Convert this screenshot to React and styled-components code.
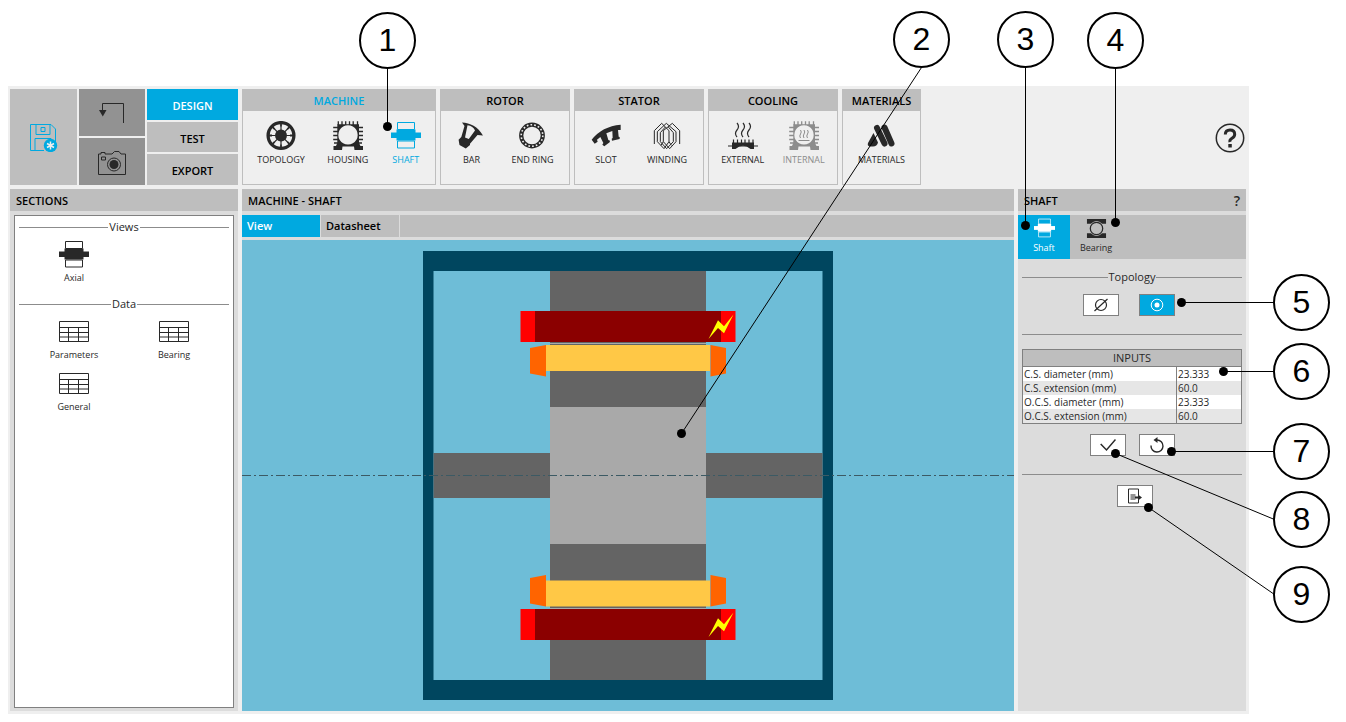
import React, { useState } from 'react'
import styled, { createGlobalStyle } from 'styled-components'

const accent = '#00a9e0'
const grey = '#bebebe'
const ink = '#282828'

const GlobalStyle = createGlobalStyle`
  * {
    box-sizing: border-box;
  }

  body {
    margin: 0;
    background: white;
    color: black;
    font-family: 'Open Sans', 'Noto Sans', sans-serif;
    font-size: 11px;
  }

  button, input {
    font: inherit;
    color: inherit;
  }

  button {
    padding: 0;
    border: 0;
    cursor: pointer;
  }
`

const Page = styled.div`
  position: relative;
  display: flex;
  min-height: 100vh;
  padding: 86px 97px 8px 8px;
`

const Frame = styled.div`
  flex: 1;
  display: flex;
  flex-direction: column;
  gap: 4px;
  min-width: 0;
  padding: 3px 3px 3px 2px;
  background: #efefef;
`

const Header = styled.header`
  display: flex;
  gap: 4px;
  height: 96px;
`

const MainMenu = styled.nav`
  display: grid;
  grid-template-columns: 67px 66px 1fr;
  gap: 2px;
  width: 228px;
`

const MenuColumn = styled.div`
  display: flex;
  flex-direction: column;
  gap: 2px;
`

const MenuButton = styled.button`
  flex: 1;
  display: flex;
  align-items: center;
  justify-content: center;
  padding-top: 2px;
  background: ${props => props.$active ? accent : props.$dark ? '#929292' : grey};
  color: ${props => props.$active ? 'white' : 'black'};
  font-size: 11px;
  font-weight: 600;
`

const Group = styled.section`
  display: flex;
  flex-direction: column;
  width: ${props => props.$width}px;
  border: 1px solid ${grey};
`

const GroupTitle = styled.h2`
  margin: 0;
  height: 21px;
  background: ${grey};
  color: ${props => props.$active ? accent : 'black'};
  font-size: 11px;
  font-weight: 600;
  line-height: 21px;
  text-align: center;
`

const GroupItems = styled.div`
  display: flex;
  justify-content: space-around;
  padding: 10px 3px 0;
`

const ToolButton = styled.button`
  display: flex;
  flex-direction: column;
  align-items: center;
  gap: 1px;
  background: none;
  color: ${props => props.$active ? accent : props.disabled ? '#8c8c8c' : ink};
  font-size: 9px;
  line-height: 16px;
`

const HelpButton = styled.button`
  align-self: center;
  margin: 1px 1px 0 auto;
  background: none;
  color: ${ink};
  line-height: 0;
`

const Workspace = styled.div`
  flex: 1;
  display: grid;
  grid-template-columns: 228px 1fr 228px;
  gap: 4px;
`

const Panel = styled.section`
  display: flex;
  flex-direction: column;
  min-width: 0;
  background: #dcdcdc;
`

const PanelTitle = styled.h2`
  display: flex;
  justify-content: space-between;
  margin: 0 0 4px;
  padding: 0 6px;
  height: 22px;
  background: ${grey};
  font-size: 11px;
  font-weight: 600;
  line-height: 24px;
`

const PanelHelp = styled.button`
  background: none;
  color: ${ink};
  font-size: 14px;
`

const SectionList = styled.div`
  flex: 1;
  margin: 0 4px 3px;
  padding: 2px 4px;
  border: 1px solid #808080;
  background: white;
`

const Legend = styled.h3`
  display: flex;
  align-items: center;
  gap: 1px;
  margin: 0;
  color: ${ink};
  font-size: 11px;
  font-weight: 400;
  line-height: 18px;

  &::before, &::after {
    content: '';
    flex: 1;
    height: 1px;
    background: #8c8c8c;
  }
`

const SectionGrid = styled.div`
  display: grid;
  grid-template-columns: 100px 100px;
  grid-auto-rows: 52px;
  padding: 5px 5px 2px;
`

const SectionButton = styled.button`
  display: flex;
  flex-direction: column;
  align-items: center;
  justify-content: flex-start;
  gap: 1px;
  background: none;
  color: ${ink};
  font-size: 9px;
  line-height: 16px;
`

const Tabs = styled.div`
  display: flex;
  height: 22px;
  margin-bottom: 3px;
  background: ${grey};
`

const Tab = styled.button`
  width: 79px;
  padding: 0 5px;
  border-right: 1px solid #dcdcdc;
  background: ${props => props.$active ? accent : 'none'};
  color: ${props => props.$active ? 'white' : 'black'};
  font-size: 11px;
  font-weight: 600;
  line-height: 22px;
  text-align: left;
`

const Canvas = styled.div`
  flex: 1;
  min-height: 0;
  background: #6ebdd7;

  svg {
    display: block;
    width: 100%;
  }
`

const IconTabs = styled.div`
  display: flex;
  height: 44px;
  background: ${grey};
`

const IconTab = styled.button`
  display: flex;
  flex-direction: column;
  align-items: center;
  gap: 1px;
  width: 52px;
  padding-top: 3px;
  background: ${props => props.$active ? accent : 'none'};
  color: ${props => props.$active ? 'white' : ink};
  font-size: 9px;
  line-height: 16px;
`

const Settings = styled.div`
  padding: 9px 4px;
`

const ButtonRow = styled.div`
  display: flex;
  justify-content: center;
  gap: ${props => props.$wide ? 20 : 13}px;
  padding-left: ${props => props.$single ? 6 : 0}px;
  padding-right: ${props => props.$wide ? 6 : 0}px;
  margin: ${props => props.$wide ? 8 : 10}px 0 18px;
`

const SmallButton = styled.button`
  display: flex;
  align-items: center;
  justify-content: center;
  width: 36px;
  height: 22px;
  border: 1px solid #808080;
  background: ${props => props.$active ? accent : 'white'};
  color: ${props => props.$active ? 'white' : ink};
`

const Divider = styled.hr`
  margin: 0;
  border: 0;
  border-top: 1px solid #8c8c8c;
`

const InputTable = styled.table`
  width: 100%;
  margin-top: 14px;
  border: 1px solid #808080;
  border-collapse: collapse;
  color: ${ink};
  font-size: 10px;
  line-height: 14px;

  th {
    height: 17px;
    padding: 0;
    border-bottom: 1px solid #808080;
    background: ${grey};
    font-size: 11px;
    font-weight: 400;
  }

  td {
    height: 14px;
    padding: 0 1px;
    background: white;
  }

  td + td {
    width: 65px;
    border-left: 1px solid #808080;
  }

  tr:nth-child(even) td {
    background: #e6e6e6;
  }

  input {
    display: block;
    width: 100%;
    height: 14px;
    padding: 0;
    border: 0;
    background: none;
  }
`

const CalloutLines = styled.svg`
  position: absolute;
  top: 0;
  left: 0;
  width: 100%;
  height: 100%;
  pointer-events: none;
`

const Callout = styled.div`
  position: absolute;
  left: ${props => props.$x - 28}px;
  top: ${props => props.$y - 28}px;
  width: 57px;
  height: 57px;
  border: 2px solid black;
  border-radius: 50%;
  background: white;
  font-family: 'Liberation Sans', Arial, sans-serif;
  font-size: 32px;
  line-height: 53px;
  text-align: center;
`

const Icon = ({ children, size = 30, height = size, box = '0 0 30 30' }) => (
  <svg width={size} height={height} viewBox={box} fill="currentColor" aria-hidden="true">
    {children}
  </svg>
)

const SaveIcon = () => (
  <Icon size={28} box="0 0 28 28">
    <g fill="none" stroke={accent} strokeWidth="1">
      <path d="M.5.5H21L25.5 5V18M.5.5V26.5H14M6 .5V10.5H20V.5M11 3.5h4v4h-4zM5 26.5V14.5H21V17" />
    </g>
    <circle cx="20.5" cy="21.5" r="6.7" fill={accent} />
    <path d="M20.5 17.5v8M17 19.5l7 4M17 23.5l7-4" stroke="#eee" strokeWidth="1.5" />
  </Icon>
)

const BackIcon = () => (
  <Icon size={26} height={21} box="0 0 26 21">
    <path d="M3.5 8V.5H24.5V20" fill="none" stroke={ink} />
    <path d="M0 7h7.5L3.8 13.5z" fill={ink} />
  </Icon>
)

const CameraIcon = () => (
  <Icon size={28} height={24} box="0 0 28 24">
    <g fill="none" stroke={ink} strokeWidth="1">
      <path d="M.5 3H3V1.5H7V3H14L16.5.5H21L23 3H27.5V23.5H.5zM3.500 6h4v3h-4z" />
      <circle cx="16" cy="13.5" r="6.5" />
    </g>
    <circle cx="16" cy="13.5" r="4.5" fill={ink} />
  </Icon>
)

const TopologyIcon = () => (
  <Icon>
    <circle cx="15" cy="14.5" r="12.9" fill="none" stroke="currentColor" strokeWidth="3.3" />
    <circle cx="15" cy="14.5" r="6" />
    {[0, 45, 90, 135, 180, 225, 270, 315].map(angle => (
      <path key={angle} d="M14.1 2h1.800v3.500h-1.800zM14.400 5h1.200v4h-1.200z" transform={`rotate(${angle} 15 14.5)`} />
    ))}
  </Icon>
)

const HousingShape = () => (
  <g>
    <path fillRule="evenodd" d="M4.3 3.3H26V22l1.500 3H30v4H21.500l-.5-3.500H9.500L9 29H.5v-4H3l1.300-3zM15 4.200a9.700 9.700 0 1 0 .01 0z" />
    <path
      d="M5.3 4V.3M9 4V.3M12.700 4V.3M16.500 4V.3M20.200 4V.3M24.500 4V.3M.2 6.500H5M.2 10.500H5M.2 14.500H5M.2 18.500H5M1 22H5M25 6.500H30M25 10.500H30M25 14.500H30M25 18.500H30M25 22H29"
      stroke="currentColor"
      strokeWidth="1.3"
    />
  </g>
)

const HousingIcon = () => <Icon><HousingShape /></Icon>

const ShaftShape = () => (
  <g>
    <path d="M6.5 1.5h17v7h-17zM6.500 20h17v7h-17z" fill="none" stroke="currentColor" strokeWidth="1" />
    <path d="M5.5 8.5h19v11h-19z" />
    <path d="M0 11.5h30v5.500H0z" />
  </g>
)

const ShaftIcon = ({ size = 30 }) => <Icon size={size}><ShaftShape /></Icon>

const AxialIcon = () => <Icon height={28} box="0 1 30 28"><ShaftShape /></Icon>

const BarIcon = () => (
  <Icon>
    <path fillRule="evenodd" d="M6 1.5C14 2 22 5.500 27 14.500L21.500 14 14 22.700V24L9.800 27.500 3.500 24 2.600 18.700 5.300 16 8.500 5zM11.500 4.300L9 16.500l3.800 1.500 6.200-8.500c-1-2.700-4-4.800-7.500-5.200z" />
  </Icon>
)

const EndRingIcon = () => (
  <Icon>
    <circle cx="15" cy="14.5" r="10.8" fill="none" stroke="currentColor" strokeWidth="4.2" />
    <circle cx="15" cy="14.5" r="10.8" fill="none" stroke="#efefef" strokeWidth="1.6" strokeDasharray="1.7 2.070" />
  </Icon>
)

const SlotIcon = () => (
  <Icon box="465 122 90 90">
    <path d="M467 178Q498 138 554 133V149H546L548 169 551 170V176L528 181 527 175 530 173 529 152 511 159 517 179 522 181 521 186 505 198 499 193 502 188 493 170 483 178 485 184 476 190z" />
  </Icon>
)

const WindingIcon = () => (
  <Icon box="648 122 90 90">
    <g fill="none" stroke="currentColor" strokeWidth="3">
      <path d="M655 191V151L677 129 699 151V184L706 195M664 184V154L691 129 720 154V184M731 191V151L709 129 682 151V184L675 195M673 157V184L692 205 712 184V157L697 140M673 157L688 140M664 184L684 205 699 184M720 184L701 205 682 184" />
    </g>
  </Icon>
)

const heat = 'q-3-3.5 0-7t0-7'

const ExternalIcon = () => (
  <Icon>
    <path d={`M9 16${heat}M15 16${heat}M21 16${heat}`} fill="none" stroke="currentColor" strokeWidth="1.2" />
    <path d="M4 21.5H26V28H22.500Q15 21.500 7.500 28H4z" />
    <path d="M0 25h30M5.500 22v-3.500M9.500 22v-3.500M13.500 22v-3.500M17 22v-3.500M21 22v-3.500M25 22v-3.500" stroke="currentColor" strokeWidth="1.2" />
  </Icon>
)

const InternalIcon = () => (
  <Icon>
    <HousingShape />
    <path d="M11.5 17q-1.500-2 0-4t0-4M15 17q-1.500-2 0-4t0-4M18.500 17q-1.500-2 0-4t0-4M9.500 19.500h11" fill="none" stroke="currentColor" />
  </Icon>
)

const MaterialsIcon = () => (
  <Icon>
    <path d="M11 7L18.5 22.500M18.500 6.500L25.500 22.500" stroke="currentColor" strokeWidth="6" strokeLinecap="round" />
    <path d="M7.5 12L12 21.500Q11 25.500 7 25.500H4Q1 25 2 22z" />
  </Icon>
)

const TableIcon = () => (
  <Icon height={28} box="0 -3 30 28">
    <path d="M.5.5h29v20H.5zM.5 6.500h29M.5 11.500h29M.5 16h29M9.500 6.500v14M19.500 6.500v14" fill="none" stroke="currentColor" />
  </Icon>
)

const BearingIcon = () => (
  <Icon size={21} box="0 0 22 22">
    <path d="M1 1h20v5h-4Q11 .5 5 6H1zM1 21h20v-5h-4Q11 21.500 5 16H1z" />
    <circle cx="11" cy="11" r="6.5" fill={grey} stroke="currentColor" strokeWidth="1.3" />
  </Icon>
)

const HelpIcon = () => (
  <Icon>
    <circle cx="15" cy="15" r="13.7" fill="none" stroke="currentColor" strokeWidth="1.5" />
    <path d="M10.3 11.5Q10.300 7 15 7T19.700 11.200Q19.700 13.500 17 15.200T15 19" fill="none" stroke="currentColor" strokeWidth="3" />
    <path d="M13.3 21h3.500v3.500h-3.500z" />
  </Icon>
)

const SolidIcon = () => (
  <Icon size={16} box="0 0 16 16">
    <g fill="none" stroke="currentColor" strokeWidth="1.2">
      <circle cx="8" cy="8" r="5.5" />
      <path d="M1.5 14L14.500 2" />
    </g>
  </Icon>
)

const HollowIcon = () => (
  <Icon size={16} box="0 0 16 16">
    <circle cx="8" cy="8" r="5.8" fill="none" stroke="currentColor" />
    <circle cx="8" cy="8" r="2.5" />
  </Icon>
)

const CheckIcon = () => (
  <Icon size={16} height={14} box="0 0 16 14">
    <path d="M.7 6L6.5 12 15.500 1.500" fill="none" stroke="currentColor" strokeWidth="1.5" />
  </Icon>
)

const ResetIcon = () => (
  <Icon size={16} box="0 0 16 16">
    <path d="M2 8.5A6 6 0 1 0 8 3H6" fill="none" stroke="currentColor" strokeWidth="1.4" />
    <path d="M8.5 0v6L4.500 3z" />
  </Icon>
)

const ExportIcon = () => (
  <Icon size={16} box="0 0 16 16">
    <path d="M11.5 7V1H1.500V15H11.500V12M3.500 7h5M3.500 9h5M3.500 11h5" fill="none" stroke="currentColor" />
    <path d="M8 8.5h3V6.500L15 9.500 11 12.500V10.500H8z" />
  </Icon>
)

const Winding = () => (
  <g>
    <rect x="278.5" y="71" width="215" height="31" fill="#ff0000" />
    <rect x="293" y="71" width="186" height="31" fill="#8b0000" />
    <path d="M466.5 99L476 80.300 482 86.300 491.500 74.500 482 93.300 476 88z" fill="#ffff00" />
  </g>
)

const Cage = () => (
  <g>
    <rect x="304" y="105" width="164" height="26" fill="#ffc846" />
    <path d="M288 108L304 105V136.500L288 133.500zM484 108L468.500 105V136.500L484 133.500z" fill="#ff6400" />
  </g>
)

const AxialView = () => (
  <svg viewBox="0 0 772 471" role="img" aria-label="Axial view">
    <path fillRule="evenodd" d="M181 11h410v449H181zM191.5 31v409h389V31z" fill="#00465f" />
    <rect x="191.5" y="213" width="389" height="45" fill="#646464" />
    <rect x="308" y="31" width="156" height="409" fill="#646464" />
    <path d="M308 103.5h156M308 368.500h156" stroke="#a9a9a9" />
    <rect x="308" y="167" width="156" height="137" fill="#a9a9a9" />
    <Winding />
    <Cage />
    <g transform="translate(0 298)">
      <Winding />
    </g>
    <g transform="translate(0 471.5) scale(1 -1)">
      <Cage />
    </g>
    <path d="M0 235.5h772" stroke="#3c5a64" strokeDasharray="9 3 2 3" />
  </svg>
)

const groups = [
  {
    title: 'MACHINE',
    width: 194,
    active: true,
    items: [
      { name: 'TOPOLOGY', icon: <TopologyIcon /> },
      { name: 'HOUSING', icon: <HousingIcon /> },
      { name: 'SHAFT', icon: <ShaftIcon />, active: true }
    ]
  },
  {
    title: 'ROTOR',
    width: 130,
    items: [
      { name: 'BAR', icon: <BarIcon /> },
      { name: 'END RING', icon: <EndRingIcon /> }
    ]
  },
  {
    title: 'STATOR',
    width: 130,
    items: [
      { name: 'SLOT', icon: <SlotIcon /> },
      { name: 'WINDING', icon: <WindingIcon /> }
    ]
  },
  {
    title: 'COOLING',
    width: 130,
    items: [
      { name: 'EXTERNAL', icon: <ExternalIcon /> },
      { name: 'INTERNAL', icon: <InternalIcon />, disabled: true }
    ]
  },
  {
    title: 'MATERIALS',
    width: 79,
    items: [{ name: 'MATERIALS', icon: <MaterialsIcon /> }]
  }
]

const initialInputs = [
  { id: 'cs-diameter', label: 'C.S. diameter (mm)', value: '23.333' },
  { id: 'cs-extension', label: 'C.S. extension (mm)', value: '60.0' },
  { id: 'ocs-diameter', label: 'O.C.S. diameter (mm)', value: '23.333' },
  { id: 'ocs-extension', label: 'O.C.S. extension (mm)', value: '60.0' }
]

// circle centre, line start and the dot it points at
const callouts = [
  { x: 387, y: 40, from: [387, 68], to: [387, 126] },
  { x: 921, y: 39, from: [921, 67], to: [681, 433] },
  { x: 1025, y: 39, from: [1025, 67], to: [1025, 225] },
  { x: 1115, y: 40, from: [1115, 68], to: [1115, 222] },
  { x: 1301, y: 302, from: [1273, 302], to: [1181, 302] },
  { x: 1301, y: 371, from: [1273, 371], to: [1223, 371] },
  { x: 1301, y: 451, from: [1273, 451], to: [1171, 451] },
  { x: 1301, y: 519, from: [1274, 519], to: [1115, 453] },
  { x: 1301, y: 594, from: [1274, 594], to: [1148, 507] }
]

const Toolbar = () => (
  <Header>
    <MainMenu>
      <MenuButton aria-label="Save"><SaveIcon /></MenuButton>
      <MenuColumn>
        <MenuButton $dark aria-label="Back"><BackIcon /></MenuButton>
        <MenuButton $dark aria-label="Screenshot"><CameraIcon /></MenuButton>
      </MenuColumn>
      <MenuColumn>
        <MenuButton $active>DESIGN</MenuButton>
        <MenuButton>TEST</MenuButton>
        <MenuButton>EXPORT</MenuButton>
      </MenuColumn>
    </MainMenu>
    {groups.map(group => (
      <Group key={group.title} $width={group.width}>
        <GroupTitle $active={group.active}>{group.title}</GroupTitle>
        <GroupItems>
          {group.items.map(item => (
            <ToolButton key={item.name} $active={item.active} disabled={item.disabled}>
              {item.icon}
              {item.name}
            </ToolButton>
          ))}
        </GroupItems>
      </Group>
    ))}
    <HelpButton aria-label="Help"><HelpIcon /></HelpButton>
  </Header>
)

const Sections = () => (
  <Panel>
    <PanelTitle>SECTIONS</PanelTitle>
    <SectionList>
      <Legend>Views</Legend>
      <SectionGrid>
        <SectionButton><AxialIcon />Axial</SectionButton>
      </SectionGrid>
      <Legend>Data</Legend>
      <SectionGrid>
        <SectionButton><TableIcon />Parameters</SectionButton>
        <SectionButton><TableIcon />Bearing</SectionButton>
        <SectionButton><TableIcon />General</SectionButton>
      </SectionGrid>
    </SectionList>
  </Panel>
)

const ShaftSettings = () => {
  const [inputs, setInputs] = useState(initialInputs)

  const onChange = (id, value) => {
    setInputs(inputs.map(input => input.id === id ? { ...input, value } : input))
  }

  return (
    <Panel>
      <PanelTitle>SHAFT<PanelHelp aria-label="Shaft help">?</PanelHelp></PanelTitle>
      <IconTabs>
        <IconTab $active><ShaftIcon size={21} />Shaft</IconTab>
        <IconTab><BearingIcon />Bearing</IconTab>
      </IconTabs>
      <Settings>
        <Legend>Topology</Legend>
        <ButtonRow $wide>
          <SmallButton aria-label="Solid"><SolidIcon /></SmallButton>
          <SmallButton $active aria-label="Hollow"><HollowIcon /></SmallButton>
        </ButtonRow>
        <Divider />
        <InputTable>
          <thead>
            <tr><th colSpan="2">INPUTS</th></tr>
          </thead>
          <tbody>
            {inputs.map(({ id, label, value }) => (
              <tr key={id}>
                <td><label htmlFor={id}>{label}</label></td>
                <td><input id={id} value={value} onChange={e => onChange(id, e.target.value)} /></td>
              </tr>
            ))}
          </tbody>
        </InputTable>
        <ButtonRow>
          <SmallButton aria-label="Apply"><CheckIcon /></SmallButton>
          <SmallButton aria-label="Reset" onClick={() => setInputs(initialInputs)}><ResetIcon /></SmallButton>
        </ButtonRow>
        <Divider />
        <ButtonRow $single>
          <SmallButton aria-label="Export"><ExportIcon /></SmallButton>
        </ButtonRow>
      </Settings>
    </Panel>
  )
}

const Callouts = () => (
  <>
    <CalloutLines aria-hidden="true">
      <g transform="translate(.5 .5)">
        {callouts.map(({ from, to }) => (
          <g key={to.join()}>
            <line x1={from[0]} y1={from[1]} x2={to[0]} y2={to[1]} stroke="black" />
            <circle cx={to[0]} cy={to[1]} r="4.5" />
          </g>
        ))}
      </g>
    </CalloutLines>
    {callouts.map(({ x, y }, i) => <Callout key={i} $x={x} $y={y}>{i + 1}</Callout>)}
  </>
)

const App = () => (
  <Page>
    <GlobalStyle />
    <Frame>
      <Toolbar />
      <Workspace>
        <Sections />
        <Panel>
          <PanelTitle>MACHINE - SHAFT</PanelTitle>
          <Tabs>
            <Tab $active>View</Tab>
            <Tab>Datasheet</Tab>
          </Tabs>
          <Canvas><AxialView /></Canvas>
        </Panel>
        <ShaftSettings />
      </Workspace>
    </Frame>
    <Callouts />
  </Page>
)

export default App
